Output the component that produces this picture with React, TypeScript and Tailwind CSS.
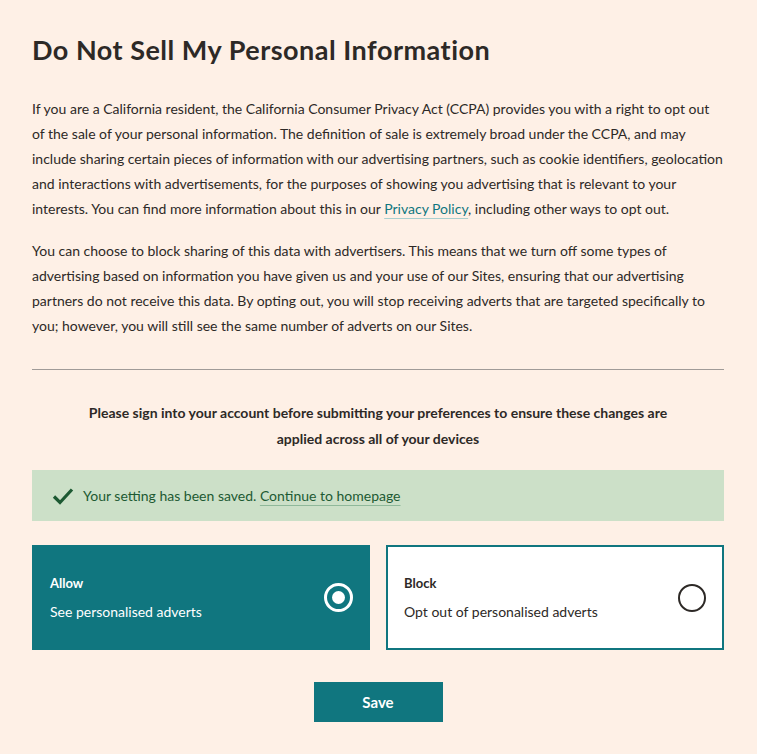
import React from "react";

export default function App() {
  return (
    <div
      className="min-h-[754px] w-full bg-[#fef0e6] text-[#2d2926]"
      style={{ fontFamily: "Lato, 'Open Sans', sans-serif" }}
    >
      <div className="px-8 pt-[31px] pb-8 w-[756px]">
        <h1 className="text-[27px] leading-[38px] font-bold tracking-[0.5px]">
          Do Not Sell My Personal Information
        </h1>
        <p className="mt-[27px] text-[14px] leading-[25px]">
          If you are a California resident, the California Consumer Privacy Act (CCPA) provides you with a right to opt out
          of the sale of your personal information. The definition of sale is extremely broad under the CCPA, and may
          include sharing certain pieces of information with our advertising partners, such as cookie identifiers, geolocation
          and interactions with advertisements, for the purposes of showing you advertising that is relevant to your
          interests. You can find more information about this in our{" "}
          <a className="text-[#10767f] underline decoration-[#a9cfcf] underline-offset-[4px]">Privacy Policy</a>, including other ways to opt out.
        </p>
        <p className="mt-[17px] text-[14px] leading-[25px]">
          You can choose to block sharing of this data with advertisers. This means that we turn off some types of
          advertising based on information you have given us and your use of our Sites, ensuring that our advertising
          partners do not receive this data. By opting out, you will stop receiving adverts that are targeted specifically to
          you; however, you will still see the same number of adverts on our Sites.
        </p>
        <hr className="mt-[31px] border-0 border-t border-[#a09b98]" />
        <p className="mt-[30px] text-center text-[14px] leading-[26px] font-bold px-10">
          Please sign into your account before submitting your preferences to ensure these changes are applied across
          all of your devices
        </p>
        <div className="mt-[18px] h-[51px] bg-[#cce0c8] flex items-center pl-[20px] text-[14px] text-[#1d5a33]">
          <svg width="22" height="18" viewBox="0 0 22 18" className="mr-[9px]">
            <path d="M2 9.5 L8 15.5 L20 2.5" fill="none" stroke="#1d5a33" strokeWidth="3.2" />
          </svg>
          <span>
            Your setting has been saved.{" "}
            <a className="underline decoration-[#8fb89a] underline-offset-[4px]">Continue to homepage</a>
          </span>
        </div>
        <div className="mt-[24px] grid grid-cols-2 gap-4">
          <div className="h-[105px] bg-[#10767f] text-white flex items-center justify-between pl-[18px] pr-[17px]">
            <div>
              <div className="text-[13px] font-bold leading-[20px]">Allow</div>
              <div className="mt-[9px] text-[14px] leading-[20px]">See personalised adverts</div>
            </div>
            <div className="w-[29px] h-[29px] rounded-full border-[3px] border-white flex items-center justify-center">
              <div className="w-[13px] h-[13px] rounded-full bg-white" />
            </div>
          </div>
          <div className="h-[105px] bg-white border-2 border-[#10767f] flex items-center justify-between pl-[16px] pr-[16px]">
            <div>
              <div className="text-[13px] font-bold leading-[20px]">Block</div>
              <div className="mt-[9px] text-[14px] leading-[20px]">Opt out of personalised adverts</div>
            </div>
            <div className="w-[28px] h-[28px] rounded-full border-2 border-[#2d2926]" />
          </div>
        </div>
        <div className="mt-[32px] flex justify-center">
          <button className="w-[129px] h-[40px] bg-[#10767f] text-white font-bold text-[15px]">Save</button>
        </div>
      </div>
    </div>
  );
}
